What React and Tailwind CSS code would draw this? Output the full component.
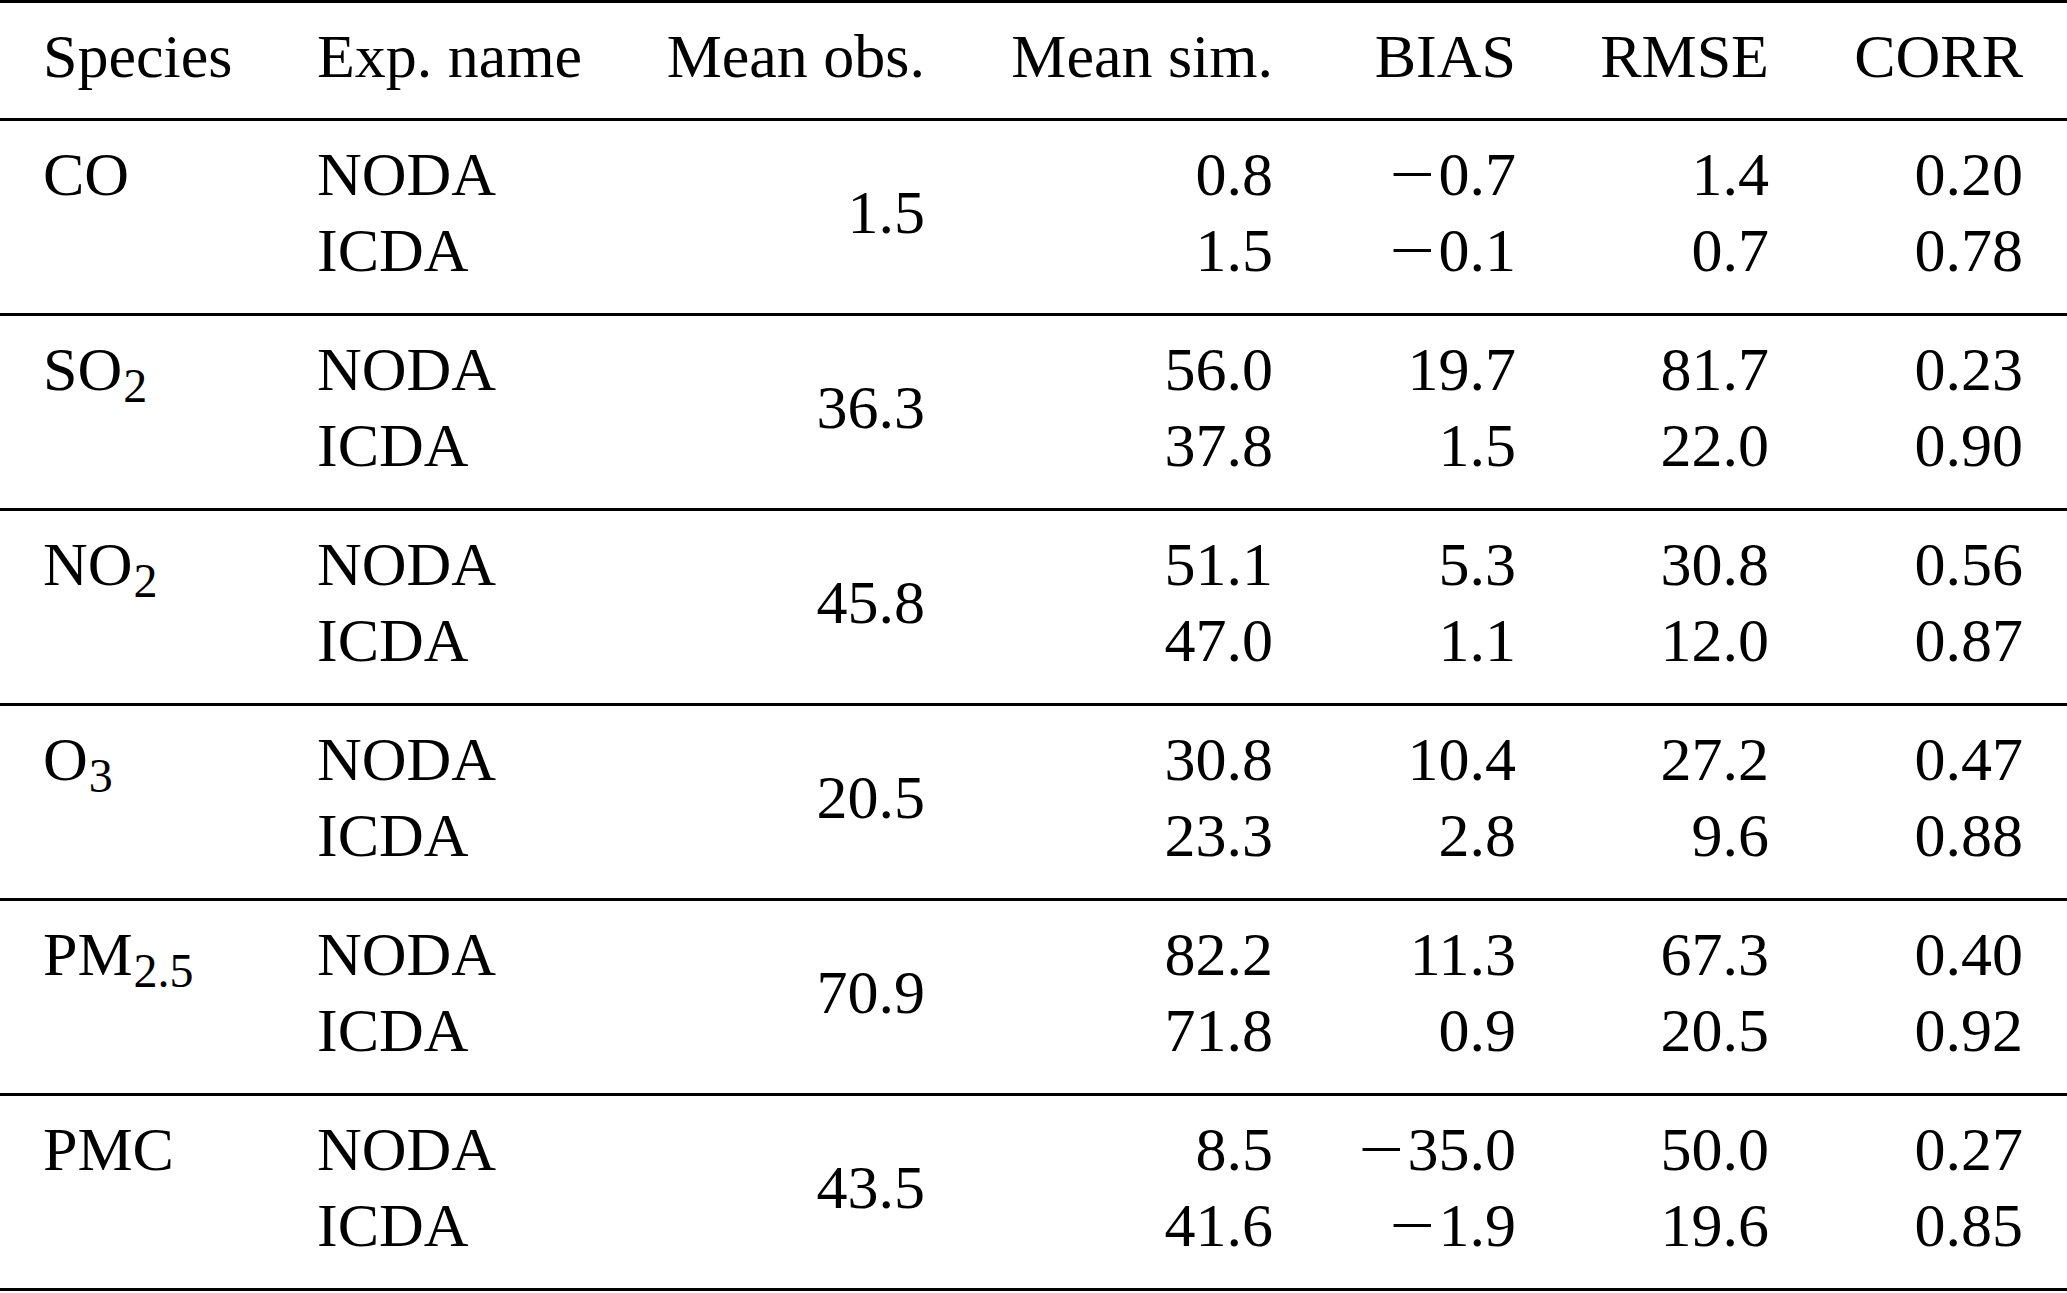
const groups = [
  { species: ["CO", null], obs: "1.5", rows: [["NODA", "0.8", "−0.7", "1.4", "0.20"], ["ICDA", "1.5", "−0.1", "0.7", "0.78"]] },
  { species: ["SO", "2"], obs: "36.3", rows: [["NODA", "56.0", "19.7", "81.7", "0.23"], ["ICDA", "37.8", "1.5", "22.0", "0.90"]] },
  { species: ["NO", "2"], obs: "45.8", rows: [["NODA", "51.1", "5.3", "30.8", "0.56"], ["ICDA", "47.0", "1.1", "12.0", "0.87"]] },
  { species: ["O", "3"], obs: "20.5", rows: [["NODA", "30.8", "10.4", "27.2", "0.47"], ["ICDA", "23.3", "2.8", "9.6", "0.88"]] },
  { species: ["PM", "2.5"], obs: "70.9", rows: [["NODA", "82.2", "11.3", "67.3", "0.40"], ["ICDA", "71.8", "0.9", "20.5", "0.92"]] },
  { species: ["PMC", null], obs: "43.5", rows: [["NODA", "8.5", "−35.0", "50.0", "0.27"], ["ICDA", "41.6", "−1.9", "19.6", "0.85"]] },
];

const cols = "grid grid-cols-[274px_283px_325px_348px_243px_253px_254px] auto-rows-[76px] pl-[43px]";

function Rule() {
  return <div className="h-[3px] bg-black"></div>;
}

// math minus is wider than the text one
function Num({ value }) {
  if (value.startsWith("−")) {
    return (
      <>
        <span className="inline-block origin-right scale-x-[1.3] mr-[4px]">−</span>
        {value.slice(1)}
      </>
    );
  }
  return value;
}

export default function App() {
  return (
    <div className="w-[2067px] h-[1293px] bg-white text-black text-[62px] leading-[76px] font-['Liberation_Serif','Times_New_Roman',serif] overflow-hidden">
      <Rule />
      {/* Header */}
      <div className={`${cols} pt-[15px] pb-[24px]`}>
        <div>Species</div>
        <div>Exp. name</div>
        <div className="text-right">Mean obs.</div>
        <div className="text-right">Mean sim.</div>
        <div className="text-right">BIAS</div>
        <div className="text-right">RMSE</div>
        <div className="text-right">CORR</div>
      </div>

      {groups.map((g, i) => (
        <div key={i}>
          <Rule />
          <div className={`${cols} pt-[15px] pb-[25px]`}>
            {/* First row */}
            <div className="whitespace-nowrap">
              {g.species[0]}
              {g.species[1] && <span className="text-[48px] leading-[40px] align-[-12px] ml-[1px]">{g.species[1]}</span>}
            </div>
            <div>{g.rows[0][0]}</div>
            <div className="row-span-2 self-center text-right">{g.obs}</div>
            <div className="text-right">{g.rows[0][1]}</div>
            <div className="text-right"><Num value={g.rows[0][2]} /></div>
            <div className="text-right">{g.rows[0][3]}</div>
            <div className="text-right">{g.rows[0][4]}</div>
            {/* Second row */}
            <div></div>
            <div>{g.rows[1][0]}</div>
            <div className="text-right">{g.rows[1][1]}</div>
            <div className="text-right"><Num value={g.rows[1][2]} /></div>
            <div className="text-right">{g.rows[1][3]}</div>
            <div className="text-right">{g.rows[1][4]}</div>
          </div>
        </div>
      ))}
      <Rule />
    </div>
  );
}
